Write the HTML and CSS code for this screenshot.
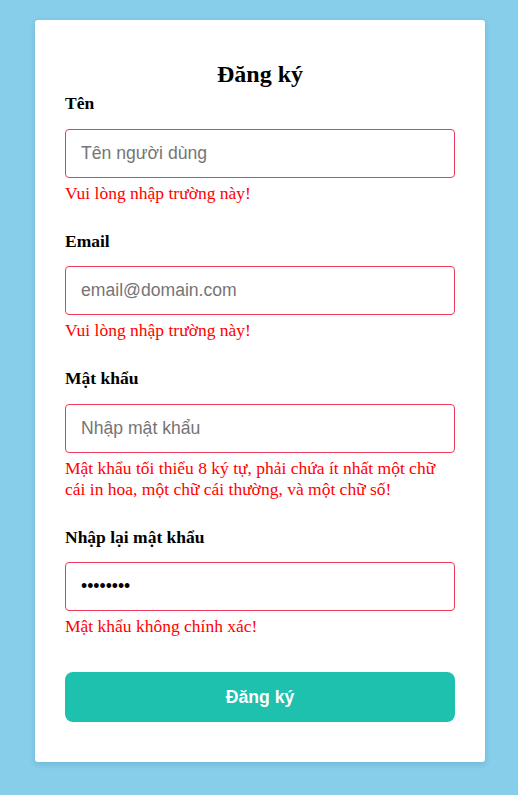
FILE: index.html
```html
<!DOCTYPE html>
<html lang="vi">
<head>
<meta charset="utf-8">
<title>Đăng ký</title>
<link rel="stylesheet" href="styles.css">
</head>
<body>
<form class="card" novalidate>
  <h2 class="title">Đăng ký</h2>
  <div class="group">
    <label class="label" for="name">Tên</label>
    <input class="field" id="name" type="text" placeholder="Tên người dùng">
    <div class="error">Vui lòng nhập trường này!</div>
  </div>
  <div class="group">
    <label class="label" for="email">Email</label>
    <input class="field" id="email" type="email" placeholder="email@domain.com">
    <div class="error">Vui lòng nhập trường này!</div>
  </div>
  <div class="group">
    <label class="label" for="pw">Mật khẩu</label>
    <input class="field" id="pw" type="password" placeholder="Nhập mật khẩu" autofocus>
    <div class="error">Mật khẩu tối thiểu 8 ký tự, phải chứa ít nhất một chữ cái in hoa, một chữ cái thường, và một chữ số!</div>
  </div>
  <div class="group">
    <label class="label" for="pw2">Nhập lại mật khẩu</label>
    <input class="field" id="pw2" type="password" value="12345678">
    <div class="error">Mật khẩu không chính xác!</div>
  </div>
  <button class="submit" type="button">Đăng ký</button>
</form>
</body>
</html>
```
FILE: styles.css
```css
html, body {
  margin: 0;
  padding: 0;
}
body {
  background: #87ceeb;
  font-family: "Liberation Serif", "Times New Roman", serif;
  padding: 20px 0 0 35px;
  min-height: 775px;
}
.card {
  width: 450px;
  box-sizing: border-box;
  background: #fff;
  border-radius: 3px;
  box-shadow: 0 2px 6px rgba(0, 80, 120, 0.18);
  padding: 40px 30px 40px;
  display: flex;
  flex-direction: column;
}
.title {
  margin: 0 0 5px;
  font-size: 24px;
  line-height: 28px;
  font-weight: bold;
  text-align: center;
  color: #000;
}
.group {
  display: flex;
  flex-direction: column;
  margin-bottom: 27px;
}
.group:last-of-type {
  margin-bottom: 35px;
}
.label {
  font-size: 17.5px;
  line-height: 20px;
  font-weight: bold;
  color: #000;
  margin-bottom: 15.5px;
}
.field {
  height: 49px;
  box-sizing: border-box;
  border: 1px solid #ee3b5b;
  border-radius: 4px;
  padding: 0 15px;
  font-family: "Liberation Sans", Arial, sans-serif;
  font-size: 17.6px;
  color: #000;
  background: #fff;
  outline: none;
  margin: 0;
}
.field::placeholder {
  color: #757575;
}
.error {
  margin-top: 5px;
  font-size: 17.5px;
  line-height: 21px;
  color: #ff0000;
}
.submit {
  height: 50px;
  border: none;
  border-radius: 8px;
  background: #1ec0ae;
  color: #fff;
  font-family: "Liberation Sans", Arial, sans-serif;
  font-size: 17.6px;
  font-weight: bold;
  cursor: pointer;
}
```
